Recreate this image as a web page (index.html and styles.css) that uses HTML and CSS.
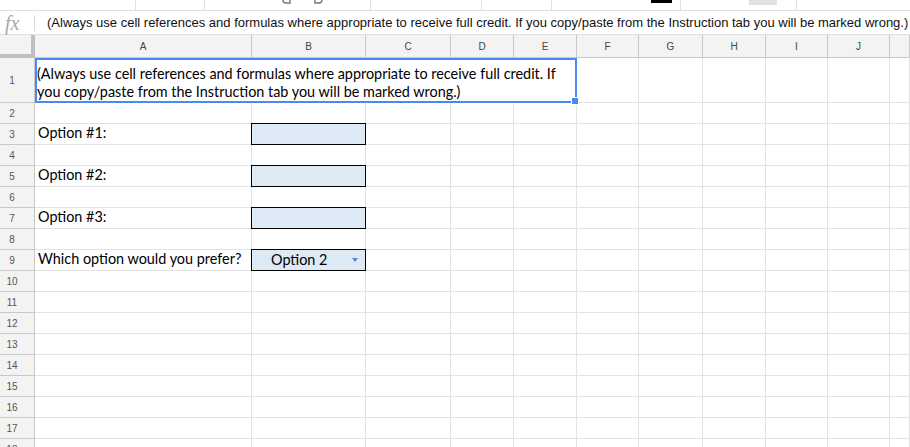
FILE: index.html
```html
<!DOCTYPE html>
<html lang="en">
<head>
    <meta charset="UTF-8">
    <title>Sheet</title>
    <link rel="stylesheet" href="styles.css">
</head>
<body>
    <!-- bottom edge of the toolbar, cut off by the screenshot -->
    <div class="toolbar">
        <div class="tb-seg tb-w1"></div>
        <div class="tb-seg tb-w2"></div>
        <div class="tb-seg tb-w3">
            <svg class="tb-arrow undo" width="9" height="4" viewBox="0 0 9 4"><path d="M1 0 Q1 3 4 3 L8 3 L8 0" fill="none" stroke="#777" stroke-width="1.4"/></svg>
            <svg class="tb-arrow redo" width="9" height="4" viewBox="0 0 9 4"><path d="M8 0 Q8 3 5 3 L1 3 L1 0" fill="none" stroke="#777" stroke-width="1.4"/></svg>
        </div>
        <div class="tb-seg tb-w4"></div>
        <div class="tb-seg tb-w5"></div>
        <div class="tb-seg tb-w6"><span class="tb-black"></span></div>
        <div class="tb-seg tb-w7"><span class="tb-grey"></span></div>
        <div class="tb-seg tb-rest"></div>
    </div>

    <div class="formula-bar">
        <span class="fx">fx</span>
        <span class="fx-sep"></span>
        <div class="formula-text">(Always use cell references and formulas where appropriate to receive full credit. If you copy/paste from the Instruction tab you will be marked wrong.)</div>
    </div>

    <div class="sheet">
        <div class="row head-row">
            <div class="corner"></div>
            <div class="col-h">A</div>
            <div class="col-h">B</div>
            <div class="col-h">C</div>
            <div class="col-h">D</div>
            <div class="col-h">E</div>
            <div class="col-h">F</div>
            <div class="col-h">G</div>
            <div class="col-h">H</div>
            <div class="col-h">I</div>
            <div class="col-h">J</div>
            <div class="col-h"></div>
        </div>

        <div class="row row-tall">
            <div class="row-h">1</div>
            <div class="cell merged selected">
                <span>(Always use cell references and formulas where appropriate to receive full credit. If you copy/paste from the Instruction tab you will be marked wrong.)</span>
                <span class="handle"></span>
            </div>
            <div class="cell"></div><div class="cell"></div><div class="cell"></div><div class="cell"></div><div class="cell"></div><div class="cell"></div>
        </div>

        <div class="row">
            <div class="row-h">2</div>
            <div class="cell"></div><div class="cell"></div><div class="cell"></div><div class="cell"></div><div class="cell"></div><div class="cell"></div><div class="cell"></div><div class="cell"></div><div class="cell"></div><div class="cell"></div><div class="cell"></div>
        </div>

        <div class="row">
            <div class="row-h">3</div>
            <div class="cell label">Option #1:</div>
            <div class="cell fill"></div>
            <div class="cell"></div><div class="cell"></div><div class="cell"></div><div class="cell"></div><div class="cell"></div><div class="cell"></div><div class="cell"></div><div class="cell"></div><div class="cell"></div>
        </div>

        <div class="row">
            <div class="row-h">4</div>
            <div class="cell"></div><div class="cell"></div><div class="cell"></div><div class="cell"></div><div class="cell"></div><div class="cell"></div><div class="cell"></div><div class="cell"></div><div class="cell"></div><div class="cell"></div><div class="cell"></div>
        </div>

        <div class="row">
            <div class="row-h">5</div>
            <div class="cell label">Option #2:</div>
            <div class="cell fill"></div>
            <div class="cell"></div><div class="cell"></div><div class="cell"></div><div class="cell"></div><div class="cell"></div><div class="cell"></div><div class="cell"></div><div class="cell"></div><div class="cell"></div>
        </div>

        <div class="row">
            <div class="row-h">6</div>
            <div class="cell"></div><div class="cell"></div><div class="cell"></div><div class="cell"></div><div class="cell"></div><div class="cell"></div><div class="cell"></div><div class="cell"></div><div class="cell"></div><div class="cell"></div><div class="cell"></div>
        </div>

        <div class="row">
            <div class="row-h">7</div>
            <div class="cell label">Option #3:</div>
            <div class="cell fill"></div>
            <div class="cell"></div><div class="cell"></div><div class="cell"></div><div class="cell"></div><div class="cell"></div><div class="cell"></div><div class="cell"></div><div class="cell"></div><div class="cell"></div>
        </div>

        <div class="row">
            <div class="row-h">8</div>
            <div class="cell"></div><div class="cell"></div><div class="cell"></div><div class="cell"></div><div class="cell"></div><div class="cell"></div><div class="cell"></div><div class="cell"></div><div class="cell"></div><div class="cell"></div><div class="cell"></div>
        </div>

        <div class="row">
            <div class="row-h">9</div>
            <div class="cell label">Which option would you prefer?</div>
            <div class="cell fill dropdown">
                <span class="dd-value">Option 2</span>
                <span class="dd-arrow"></span>
            </div>
            <div class="cell"></div><div class="cell"></div><div class="cell"></div><div class="cell"></div><div class="cell"></div><div class="cell"></div><div class="cell"></div><div class="cell"></div><div class="cell"></div>
        </div>

        <div class="row"><div class="row-h">10</div><div class="cell"></div><div class="cell"></div><div class="cell"></div><div class="cell"></div><div class="cell"></div><div class="cell"></div><div class="cell"></div><div class="cell"></div><div class="cell"></div><div class="cell"></div><div class="cell"></div></div>
        <div class="row"><div class="row-h">11</div><div class="cell"></div><div class="cell"></div><div class="cell"></div><div class="cell"></div><div class="cell"></div><div class="cell"></div><div class="cell"></div><div class="cell"></div><div class="cell"></div><div class="cell"></div><div class="cell"></div></div>
        <div class="row"><div class="row-h">12</div><div class="cell"></div><div class="cell"></div><div class="cell"></div><div class="cell"></div><div class="cell"></div><div class="cell"></div><div class="cell"></div><div class="cell"></div><div class="cell"></div><div class="cell"></div><div class="cell"></div></div>
        <div class="row"><div class="row-h">13</div><div class="cell"></div><div class="cell"></div><div class="cell"></div><div class="cell"></div><div class="cell"></div><div class="cell"></div><div class="cell"></div><div class="cell"></div><div class="cell"></div><div class="cell"></div><div class="cell"></div></div>
        <div class="row"><div class="row-h">14</div><div class="cell"></div><div class="cell"></div><div class="cell"></div><div class="cell"></div><div class="cell"></div><div class="cell"></div><div class="cell"></div><div class="cell"></div><div class="cell"></div><div class="cell"></div><div class="cell"></div></div>
        <div class="row"><div class="row-h">15</div><div class="cell"></div><div class="cell"></div><div class="cell"></div><div class="cell"></div><div class="cell"></div><div class="cell"></div><div class="cell"></div><div class="cell"></div><div class="cell"></div><div class="cell"></div><div class="cell"></div></div>
        <div class="row"><div class="row-h">16</div><div class="cell"></div><div class="cell"></div><div class="cell"></div><div class="cell"></div><div class="cell"></div><div class="cell"></div><div class="cell"></div><div class="cell"></div><div class="cell"></div><div class="cell"></div><div class="cell"></div></div>
        <div class="row"><div class="row-h">17</div><div class="cell"></div><div class="cell"></div><div class="cell"></div><div class="cell"></div><div class="cell"></div><div class="cell"></div><div class="cell"></div><div class="cell"></div><div class="cell"></div><div class="cell"></div><div class="cell"></div></div>
        <div class="row"><div class="row-h">18</div><div class="cell"></div><div class="cell"></div><div class="cell"></div><div class="cell"></div><div class="cell"></div><div class="cell"></div><div class="cell"></div><div class="cell"></div><div class="cell"></div><div class="cell"></div><div class="cell"></div></div>
    </div>
</body>
</html>
```

FILE: styles.css
```css
/* Base */
* {
    margin: 0;
    padding: 0;
    box-sizing: border-box;
}

body {
    width: 910px;
    height: 447px;
    overflow: hidden;
    background: #fff;
    font-family: "Liberation Sans", Arial, sans-serif;
    color: #000;
}

/* Toolbar remains at the very top */
.toolbar {
    display: flex;
    height: 11px;
    border-bottom: 1px solid #e0e0e0;
}

.tb-seg {
    position: relative;
    height: 10px;
    border-right: 1px solid #e0e0e0;
}

.tb-w1 { width: 136px; }
.tb-w2 { width: 69px; }
.tb-w3 { width: 166px; }
.tb-w4 { width: 111px; }
.tb-w5 { width: 70px; }
.tb-w6 { width: 129px; }
.tb-w7 { width: 116px; }
.tb-rest { flex: 1; border-right: none; }

.tb-w3 {
    display: flex;
    align-items: flex-start;
    padding-left: 77px;
    gap: 23px;
}

.tb-w6 {
    padding-left: 99px;
}

.tb-black {
    display: block;
    width: 21px;
    height: 3px;
    background: #000;
}

.tb-w7 {
    padding-left: 68px;
}

.tb-grey {
    display: block;
    width: 28px;
    height: 5px;
    background: #e1e1e1;
}

/* Formula bar */
.formula-bar {
    display: flex;
    align-items: center;
    height: 24px;
    border-bottom: 1px solid #e0e0e0;
}

.fx {
    width: 34px;
    padding-left: 5px;
    font-family: "Liberation Serif", serif;
    font-style: italic;
    font-size: 20px;
    color: #a8a8a8;
    line-height: 20px;
}

.fx-sep {
    width: 1px;
    height: 16px;
    background: #dadada;
    margin-right: 12px;
}

.formula-text {
    font-size: 13px;
    white-space: nowrap;
    color: #111;
}

/* Grid */
.row {
    display: grid;
    grid-template-columns: 35px 217px 114px 85px 63px 63px 62px 64px 63px 62px 62px 1fr;
    height: 21px;
}

.row-tall {
    height: 45px;
}

.head-row {
    height: 23px;
}

.corner {
    background: #f3f3f3;
    border-right: 4px solid #c0c0c0;
    border-bottom: 4px solid #c0c0c0;
}

.col-h {
    background: #f3f3f3;
    border-right: 1px solid #c8c8c8;
    border-bottom: 1px solid #c8c8c8;
    font-size: 10px;
    color: #444;
    display: flex;
    align-items: center;
    justify-content: center;
}

.row-h {
    background: #f3f3f3;
    border-right: 1px solid #c8c8c8;
    border-bottom: 1px solid #c8c8c8;
    font-size: 10px;
    color: #555;
    display: flex;
    align-items: center;
    justify-content: center;
    padding-right: 10px;
}

.cell {
    border-right: 1px solid #e2e2e2;
    border-bottom: 1px solid #e2e2e2;
    font-family: Lato, "Open Sans", sans-serif;
    font-size: 14.4px;
    display: flex;
    align-items: flex-end;
    white-space: nowrap;
}

.label {
    padding: 0 0 2px 3px;
    line-height: 18px;
}

.merged {
    grid-column: span 5;
    white-space: normal;
    line-height: 17.5px;
    padding: 0 4px 1px 0;
}

.selected {
    position: relative;
    border: 2px solid #4a89f0;
    z-index: 2;
}

.handle {
    position: absolute;
    right: -4px;
    bottom: -4px;
    width: 8px;
    height: 8px;
    background: #4a89f0;
    border: 1px solid #fff;
}

/* Input boxes in column B */
.fill {
    position: relative;
    z-index: 1;
    margin: -1px 0 0 -1px;
    border: 1px solid #000;
    background: #dde9f5;
}

.dropdown {
    align-items: center;
    padding-left: 19px;
    line-height: 18px;
}

.dd-value {
    flex: 1;
}

.dd-arrow {
    width: 0;
    height: 0;
    border-left: 3.5px solid transparent;
    border-right: 3.5px solid transparent;
    border-top: 4px solid #4a89f0;
    margin-right: 7px;
}
```
